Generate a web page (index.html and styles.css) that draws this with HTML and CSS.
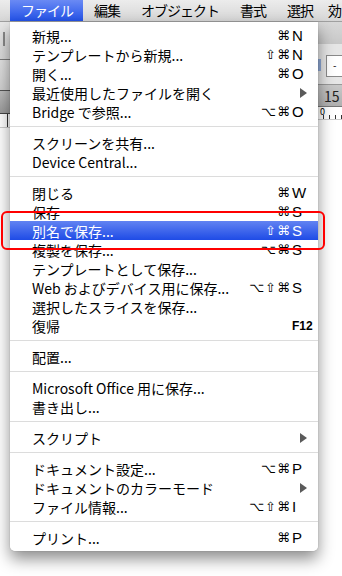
FILE: index.html
```html
<!DOCTYPE html>
<html lang="ja">
<head>
    <meta charset="UTF-8">
    <meta name="viewport" content="width=device-width, initial-scale=1.0">
    <title>ファイルメニュー</title>
    <link rel="stylesheet" href="styles.css">
</head>
<body>

<div class="menubar">
    <span class="menubar-item active">ファイル</span>
    <span class="menubar-item">編集</span>
    <span class="menubar-item">オブジェクト</span>
    <span class="menubar-item">書式</span>
    <span class="menubar-item">選択</span>
    <span class="menubar-item tight">効</span>
</div>

<div class="window">
    <div class="side-left">
        <div class="tb-top"><span class="grip"></span></div>
        <div class="tb-mid"></div>
        <div class="tb-ctrl"></div>
        <div class="ruler"><span class="ruler-line"></span></div>
    </div>
    <div class="side-mid"></div>
    <div class="side-right">
        <div class="tb-top"></div>
        <div class="tb-mid"><span class="focus"></span><span class="field">-</span></div>
        <div class="tb-ctrl"><span class="size">15</span></div>
        <div class="ruler"><span class="zero">0</span></div>
    </div>
</div>

<div class="menu">
    <div class="item"><span class="label">新規...</span><span class="mods">⌘</span><span class="key">N</span></div>
    <div class="item"><span class="label">テンプレートから新規...</span><span class="mods">⇧⌘</span><span class="key">N</span></div>
    <div class="item"><span class="label">開く...</span><span class="mods">⌘</span><span class="key">O</span></div>
    <div class="item"><span class="label">最近使用したファイルを開く</span><span class="arrow"></span></div>
    <div class="item"><span class="label">Bridge で参照...</span><span class="mods">⌥⌘</span><span class="key">O</span></div>
    <div class="sep"></div>
    <div class="item"><span class="label">スクリーンを共有...</span></div>
    <div class="item"><span class="label">Device Central...</span></div>
    <div class="sep"></div>
    <div class="item"><span class="label">閉じる</span><span class="mods">⌘</span><span class="key">W</span></div>
    <div class="item"><span class="label">保存</span><span class="mods">⌘</span><span class="key">S</span></div>
    <div class="item selected"><span class="label">別名で保存...</span><span class="mods">⇧⌘</span><span class="key">S</span></div>
    <div class="item"><span class="label">複製を保存...</span><span class="mods">⌥⌘</span><span class="key">S</span></div>
    <div class="item"><span class="label">テンプレートとして保存...</span></div>
    <div class="item"><span class="label">Web およびデバイス用に保存...</span><span class="mods">⌥⇧⌘</span><span class="key">S</span></div>
    <div class="item"><span class="label">選択したスライスを保存...</span></div>
    <div class="item"><span class="label">復帰</span><span class="mods"></span><span class="key fkey">F12</span></div>
    <div class="sep"></div>
    <div class="item"><span class="label">配置...</span></div>
    <div class="sep"></div>
    <div class="item"><span class="label">Microsoft Office 用に保存...</span></div>
    <div class="item"><span class="label">書き出し...</span></div>
    <div class="sep"></div>
    <div class="item"><span class="label">スクリプト</span><span class="arrow"></span></div>
    <div class="sep"></div>
    <div class="item"><span class="label">ドキュメント設定...</span><span class="mods">⌥⌘</span><span class="key">P</span></div>
    <div class="item"><span class="label">ドキュメントのカラーモード</span><span class="arrow"></span></div>
    <div class="item"><span class="label">ファイル情報...</span><span class="mods">⌥⇧⌘</span><span class="key">I</span></div>
    <div class="sep"></div>
    <div class="item"><span class="label">プリント...</span><span class="mods">⌘</span><span class="key">P</span></div>
</div>

<div class="callout"></div>

</body>
</html>
```

FILE: styles.css
```css
body {
    margin: 0;
    font-family: "Noto Sans CJK JP", "Noto Sans", sans-serif;
    background-color: #ffffff;
    color: #000;
    height: 576px;
    overflow: hidden;
}

/* menu bar */

.menubar {
    display: flex;
    height: 22px;
    padding-left: 10px;
    background: linear-gradient(#ececec, #d6d6d6);
    border-bottom: 1px solid #a0a0a0;
    box-sizing: border-box;
    font-size: 14px;
    line-height: 21px;
    letter-spacing: -1px;
    white-space: nowrap;
    overflow: hidden;
}

.menubar-item {
    flex-shrink: 0;
    padding: 0 10px 0 11px;
}

.menubar-item.tight {
    padding-left: 5px;
}

.menubar-item.active {
    background: linear-gradient(#6a8af4, #2352e8);
    color: #fff;
}

/* window behind the menu */

.window {
    display: flex;
}

.side-left {
    width: 10px;
}

.side-mid {
    flex: 1;
}

.side-right {
    width: 24px;
}

.tb-top {
    height: 37px;
    background: linear-gradient(#e8e8e8, #d8d8d8);
    border-bottom: 1px solid #7a7a7a;
    position: relative;
}

.tb-mid {
    height: 30px;
    background: linear-gradient(#e2e2e2, #d0d0d0);
    border-bottom: 1px solid #555;
    position: relative;
}

.tb-ctrl {
    height: 22px;
    background: linear-gradient(#bdbdbd, #9c9c9c);
    border-bottom: 1px solid #444;
    font-size: 14px;
    line-height: 22px;
}

.ruler {
    height: 13px;
    background-color: #fff;
    border-bottom: 1px solid #ccc;
    position: relative;
}

.side-right .tb-top {
    height: 22px;
    background: linear-gradient(#d8d8d8, #c8c8c8);
    border-bottom: none;
}

.side-right .tb-mid {
    height: 40px;
    background: #e6e6e6;
    border-bottom: 1px solid #999;
}

.side-right .tb-ctrl {
    height: 21px;
    background: linear-gradient(#c8c8c8, #b0b0b0);
    border-bottom: 1px solid #777;
}

.side-right .ruler {
    height: 12px;
    background: repeating-linear-gradient(90deg, transparent 0 5px, #333 5px 6px) bottom / 100% 4px no-repeat, #fff;
}

.grip {
    position: absolute;
    left: 3px;
    top: 10px;
    width: 2px;
    height: 14px;
    background-color: #888;
}

.ruler-line {
    position: absolute;
    left: 7px;
    top: 0;
    width: 1px;
    height: 100%;
    background-color: #333;
}

.focus {
    position: absolute;
    left: 0;
    top: 15px;
    width: 3px;
    height: 12px;
    background-color: #8fa9d6;
}

.field {
    position: absolute;
    left: 8px;
    top: 11px;
    width: 20px;
    height: 20px;
    background-color: #fff;
    border: 1px solid #8a8a8a;
    font-size: 10px;
    line-height: 18px;
    text-indent: 6px;
}

.size {
    padding-left: 6px;
    color: #222;
}

.zero {
    position: absolute;
    left: 2px;
    top: -2px;
    font-size: 9px;
}

/* dropdown menu */

.menu {
    position: absolute;
    left: 10px;
    top: 22px;
    width: 308px;
    padding: 4px 0 4px;
    background-color: rgba(255, 255, 255, 0.97);
    border-radius: 0 0 5px 5px;
    box-shadow: 0 8px 16px rgba(0, 0, 0, 0.45), 0 0 1px rgba(0, 0, 0, 0.4);
    font-size: 14px;
}

.item {
    display: flex;
    align-items: center;
    height: 19px;
    padding-left: 22px;
    white-space: nowrap;
}

.item.selected {
    background: linear-gradient(#6283f2, #1e4be6);
    color: #fff;
}

.label {
    flex: 1;
}

.mods {
    width: 60px;
    text-align: right;
    font-family: "DejaVu Sans", sans-serif;
    font-size: 13px;
    letter-spacing: 1px;
}

.key {
    width: 26px;
    padding-left: 1px;
    font-family: "Liberation Sans", sans-serif;
    font-size: 15px;
}

.fkey {
    font-size: 12px;
    font-weight: bold;
}

.arrow {
    width: 0;
    height: 0;
    margin-right: 11px;
    border-top: 5px solid transparent;
    border-bottom: 5px solid transparent;
    border-left: 7px solid #5a5a5a;
}

.sep {
    height: 1px;
    margin: 5px 0 6px;
    background-color: #dcdcdc;
}

/* red highlight around 別名で保存 */

.callout {
    position: absolute;
    left: 1px;
    top: 211px;
    width: 320px;
    height: 35px;
    border: 2px solid #ff0000;
    border-radius: 6px;
}
```
